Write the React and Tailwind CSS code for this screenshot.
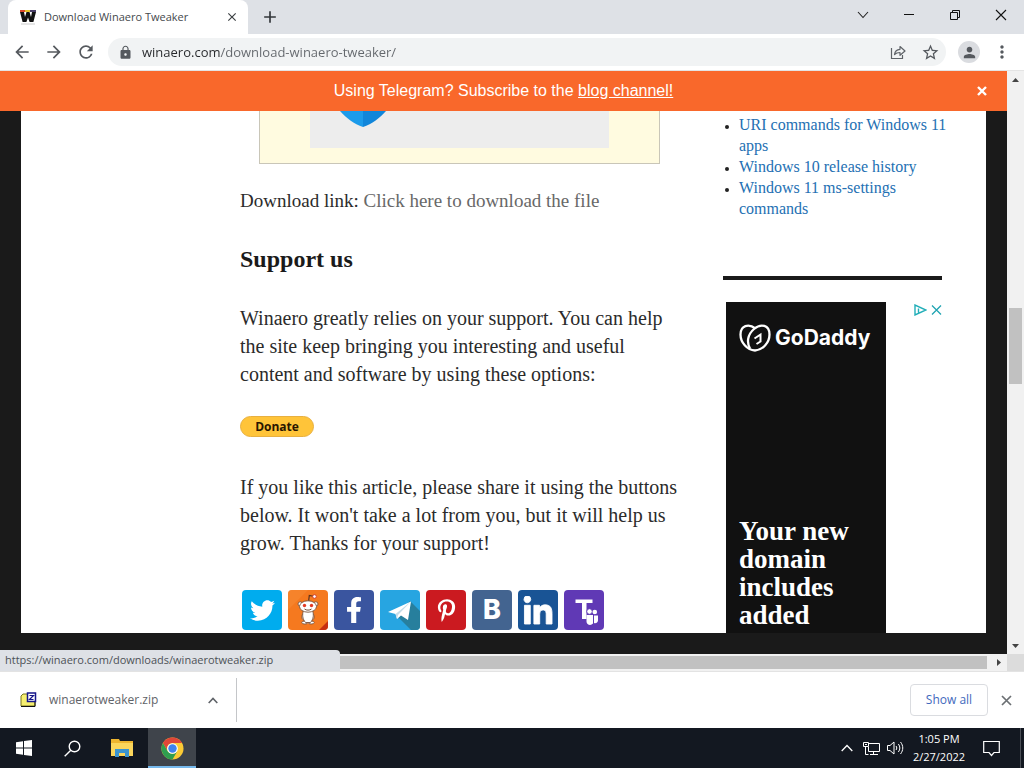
import React from "react";
import { MdArrowBack, MdArrowForward, MdRefresh, MdLock, MdStarBorder, MdMoreVert, MdPerson, MdClose, MdAdd } from "react-icons/md";
import { FaTwitter, FaFacebookF, FaPinterestP, FaLinkedinIn } from "react-icons/fa";

const uiFont = "font-['Open_Sans','Noto_Sans',sans-serif]";
const serif = "font-['Liberation_Serif',serif]";

function TabStrip() {
  return (
    <header className="flex h-[34px] shrink-0 items-stretch bg-[#dee1e6]">
      <div className="ml-2 flex w-60 items-center rounded-t-lg bg-white pl-3 pr-2">
        <svg width="16" height="16" viewBox="0 0 16 16" aria-hidden="true" className="shrink-0">
          <path d="M0 3h4l1 5 1.500-5h3L11 8l1-5h4l-2.600 10H9.600L8 8.500 6.400 13H2.600z" fill="#111" />
          <path d="M0 2h5" stroke="#d9472b" strokeWidth="2" />
          <path d="M5 2h5" stroke="#e8c32c" strokeWidth="2" />
          <path d="M10 2h6" stroke="#4a3f68" strokeWidth="2" />
          <path d="M1 15h14" stroke="#ccc" />
        </svg>
        <span className="ml-2 flex-1 whitespace-nowrap text-[11px] text-[#45494d]">Download Winaero Tweaker</span>
        <button aria-label="Close tab" className="flex size-4 items-center justify-center text-[#3c4043]"><MdClose size={14} /></button>
      </div>
      <button aria-label="New tab" className="ml-3 flex w-5 items-center justify-center text-[#33373b]"><MdAdd size={20} /></button>
      <div className="flex-1" />
      <div className="flex items-center pb-1">
        <button aria-label="Search tabs" className="flex w-[46px] justify-center">
          <svg width="12" height="8" viewBox="0 0 12 8" fill="none" stroke="#222" strokeWidth="1.100"><path d="M1 1l5 5.500L11 1" /></svg>
        </button>
        <button aria-label="Minimize" className="flex w-[46px] justify-center">
          <svg width="10" height="10" viewBox="0 0 10 10" stroke="#111"><path d="M0 4.500h10" /></svg>
        </button>
        <button aria-label="Restore" className="flex w-[46px] justify-center">
          <svg width="10" height="10" viewBox="0 0 10 10" fill="none" stroke="#111"><path d="M.5 2.500h7v7h-7zM2.500 2.500v-2h7v7h-2" /></svg>
        </button>
        <button aria-label="Close window" className="flex w-[46px] justify-center">
          <svg width="12" height="12" viewBox="0 0 12 12" stroke="#111" strokeWidth="1.100"><path d="M1 1l10 10M11 1L1 11" /></svg>
        </button>
      </div>
    </header>
  );
}

function Toolbar() {
  return (
    <div className="flex h-[37px] shrink-0 items-center border-b border-[#e4e4e4] bg-white px-3 text-[#55595e]">
      <button aria-label="Back" className="flex w-5 justify-center"><MdArrowBack size={20} /></button>
      <button aria-label="Forward" className="ml-3 flex w-5 justify-center"><MdArrowForward size={20} /></button>
      <button aria-label="Reload" className="ml-3 flex w-5 justify-center"><MdRefresh size={20} /></button>
      <div className="ml-3 flex h-7 flex-1 items-center rounded-full bg-[#f1f3f4] pl-[10px] pr-[6px]">
        <MdLock size={15} className="shrink-0" />
        <input
          aria-label="Address"
          defaultValue="winaero.com/download-winaero-tweaker/"
          className="ml-[9px] h-7 min-w-0 flex-1 bg-[linear-gradient(90deg,#26282b_78px,#63676c_78px)] bg-clip-text text-[13px] text-transparent outline-none"
        />
        <button aria-label="Share this page" className="flex w-5 justify-center">
          <svg width="16" height="16" viewBox="0 0 16 16" fill="none" stroke="#5f6368" strokeWidth="1.200">
            <path d="M1.500 4v10.500h11V11" />
            <path d="M4.500 10.500c.5-3.500 2.500-5 5.500-5.200V2.500l5 4.500-5 4.300V8.500c-2.500 0-4 .5-5.500 2z" strokeLinejoin="round" />
          </svg>
        </button>
        <button aria-label="Bookmark this tab" className="ml-3 flex w-5 justify-center"><MdStarBorder size={19} /></button>
      </div>
      <button aria-label="Profile" className="ml-3 flex size-[22px] items-center justify-center rounded-full bg-[#dadce0]"><MdPerson size={17} /></button>
      <button aria-label="Menu" className="ml-3 flex w-5 justify-center"><MdMoreVert size={20} /></button>
    </div>
  );
}

const tile = "flex size-10 items-center justify-center overflow-hidden rounded-[4px] text-white";

function ShareButtons() {
  return (
    <div className="mt-[33px] flex gap-[6px] pl-[2px]">
      <a href="#twitter" aria-label="Twitter" className={`${tile} bg-[#00acee]`}><FaTwitter size={25} /></a>
      <a href="#reddit" aria-label="Reddit" className={`${tile} bg-[#f5791f]`}>
        <svg width="40" height="40" viewBox="0 0 40 40">
          <path d="M0 20L20 0H0z" fill="#f68a33" opacity=".6" />
          <path d="M40 31v9h-9z" fill="#c62f12" />
          <path d="M20.500 12l.8-6.500 5 1" fill="none" stroke="#5a3320" strokeWidth="1.200" />
          <circle cx="26.500" cy="6.500" r="1.800" fill="#fff" stroke="#c33" strokeWidth=".8" />
          <g fill="#fff" stroke="#7b523a" strokeWidth=".9">
            <ellipse cx="16.800" cy="32.500" rx="3" ry="1.500" />
            <ellipse cx="23.200" cy="32.500" rx="3" ry="1.500" />
            <path d="M15.200 23c-2 3-1.500 6 .2 7M24.800 23c2 3 1.500 6-.2 7" />
            <path d="M15.500 20h9c1.500 5 1 9-2 12.500h-5c-3-3.500-3.500-7.500-2-12.500z" />
            <circle cx="12.200" cy="14" r="2.200" /><circle cx="27.800" cy="14" r="2.200" />
            <ellipse cx="20" cy="16.500" rx="8.500" ry="5.700" />
          </g>
          <circle cx="16.500" cy="15.500" r="1.700" fill="#e33b26" /><circle cx="23.500" cy="15.500" r="1.700" fill="#e33b26" />
          <path d="M16.500 19c2 1.500 5 1.500 7 0" fill="none" stroke="#754d38" />
        </svg>
      </a>
      <a href="#facebook" aria-label="Facebook" className={`${tile} bg-[#3a559f]`}><FaFacebookF size={26} /></a>
      <a href="#telegram" aria-label="Telegram" className={`${tile} bg-[#27a5e1]`}>
        <svg width="40" height="40" viewBox="0 0 40 40">
          <path d="M30 11l10 10v19H31L17 26z" fill="#277f9d" />
          <path d="M8 22l23-10.500L28 30l-7-4.500-4 3.500-1.500-5z" fill="#fff" />
          <path d="M15.500 24L31 11.500 18 25l-1 4z" fill="#c5dce8" />
        </svg>
      </a>
      <a href="#pinterest" aria-label="Pinterest" className={`${tile} bg-[#cb1a20]`}><FaPinterestP size={23} /></a>
      <a href="#vk" aria-label="VK" className={`${tile} bg-[#436490] font-['Inter',sans-serif] text-[27px] font-extrabold leading-10`}>B</a>
      <a href="#linkedin" aria-label="LinkedIn" className={`${tile} bg-[#195495] pt-1`}><FaLinkedinIn size={32} stroke="currentColor" strokeWidth={14} /></a>
      <a href="#teams" aria-label="Teams" className={`${tile} bg-[#6039b5]`}>
        <svg width="40" height="40" viewBox="0 0 40 40" fill="#fff">
          <path d="M11.500 9.500h17v3.500h-6v16h-4.500V13h-6.500z" />
          <circle cx="25.500" cy="21.500" r="2.800" stroke="#6039b5" /><circle cx="30.800" cy="22" r="2.300" />
          <path d="M22.500 25h6.500v8.500c-2 2.500-6.500 1.500-6.500-2zM30 25.500h4v5c0 2-2.500 3.500-4 2.500z" />
        </svg>
      </a>
    </div>
  );
}

function Article() {
  return (
    <main className={`min-w-0 flex-1 whitespace-nowrap ${serif} text-[20px] leading-7 text-[#2b2b2b]`}>
      <div className="ml-[19px] mr-3 h-[53px] border border-t-0 border-[#c9c6b8] bg-[#fffbe0] px-[50px] pb-[15px]">
        <div className="h-full bg-[#ededed] pl-[30px]">
          <svg width="46" height="16" viewBox="0 0 46 16" aria-hidden="true">
            <path d="M0 0h23v16C14 13 6 7 0 0z" fill="#1c9bea" />
            <path d="M23 0h23C40 7 32 13 23 16z" fill="#1186da" />
          </svg>
        </div>
      </div>
      <p className="mt-[23px] text-[19px]">Download link: <a href="#download" className="text-[#686868]">Click here to download the file</a></p>
      <h2 className="mt-[30px] text-[24px] font-bold text-[#1a1a1a]">Support us</h2>
      <p className="mt-[31px]">Winaero greatly relies on your support. You can help<br />the site keep bringing you interesting and useful<br />content and software by using these options:</p>
      <button className={`mt-7 block h-[21px] w-[74px] rounded-full border border-[#e8b040] bg-[#ffc439] ${uiFont} text-[12px] font-bold leading-[18px] text-[#2a1500]`}>Donate</button>
      <p className="mt-9">If you like this article, please share it using the buttons<br />below. It won't take a lot from you, but it will help us<br />grow. Thanks for your support!</p>
      <ShareButtons />
    </main>
  );
}

function Sidebar() {
  return (
    <aside className={`w-[219px] shrink-0 ${serif}`}>
      <ul className="list-disc whitespace-nowrap pl-4 pt-[3px] text-[16px] leading-[21px] text-[#222] marker:text-[12px]">
        <li><a href="#uri" className="text-[#2470b3]">URI commands for Windows 11<br />apps</a></li>
        <li><a href="#history" className="text-[#2470b3]">Windows 10 release history</a></li>
        <li><a href="#settings" className="text-[#2470b3]">Windows 11 ms-settings<br />commands</a></li>
      </ul>
      <hr className="mt-[57px] border-0 border-t-4 border-[#1a1a1a]" />
      <div className="mt-[22px] flex items-start justify-between pl-[3px]">
        <a href="#godaddy" className="flex h-[400px] w-40 flex-col bg-[#111] pl-[13px] pt-[21px] text-white">
          <span className="flex items-center gap-1">
            <svg width="32" height="30" viewBox="0 0 32 30" fill="none" stroke="#fff" strokeWidth="2.300" className="shrink-0">
              <path d="M16 27.500C8 27 1.500 19.500 1.500 11.500 1.500 2.500 9.500 0 16.500 5.500" />
              <path d="M16 27.500c8-.5 14.500-8 14.500-16C30.500 2 22 0 15 6 8.500 11.500 7.500 19.500 11 25.500" />
              <path d="M15.500 15.500l6-4v7l-4 2.500" strokeWidth="2" />
            </svg>
            <span className="font-['Inter',sans-serif] text-[21px] font-bold leading-[30px]">GoDaddy</span>
          </span>
          <span className="mt-[164px] text-[27px] font-bold leading-7">Your new<br />domain<br />includes<br />added<br />privacy</span>
        </a>
        <div className="flex gap-1 pt-[2px]">
          <button aria-label="AdChoices">
            <svg width="13" height="12" viewBox="0 0 13 12" fill="none" stroke="#21aeb8" strokeWidth="1.400"><path d="M1 1v10l11-5zM4.500 4.500v4" /></svg>
          </button>
          <button aria-label="Close ad">
            <svg width="11" height="12" viewBox="0 0 11 12" stroke="#21a4b2" strokeWidth="1.300"><path d="M1 1.500l9 9M10 1.500l-9 9" /></svg>
          </button>
        </div>
      </div>
    </aside>
  );
}

function Viewport() {
  return (
    <div className="relative flex min-h-0 flex-1 flex-col">
      <div className="flex min-h-0 flex-1">
        <div className="flex min-w-0 flex-1 flex-col bg-[#1a1a1a]">
          <div className="flex h-10 shrink-0 items-center bg-[#f9682b] pr-5 font-['Liberation_Sans',sans-serif] text-[16px] text-white">
            <p className="flex-1 pl-5 text-center">Using Telegram? Subscribe to the <a href="#channel" className="underline">blog channel!</a></p>
            <button aria-label="Dismiss" className="-ml-[10px] flex w-[10px] justify-center">
              <svg width="10" height="10" viewBox="0 0 10 10" stroke="#fff" strokeWidth="2.400"><path d="M1 1l8 8M9 1L1 9" /></svg>
            </button>
          </div>
          <div className="mx-[21px] mb-[21px] flex min-h-0 flex-1 gap-[51px] overflow-hidden bg-white pl-[219px] pr-11">
            <Article />
            <Sidebar />
          </div>
        </div>
        <div className="flex w-[17px] flex-col items-center bg-[#f1f1f1]">
          <svg width="17" height="17" viewBox="0 0 17 17"><path d="M5 11l3.500-4 3.500 4z" fill="#444" /></svg>
          <div className="flex-[220]" />
          <div className="h-[76px] w-[13px] bg-[#c1c1c1]" />
          <div className="flex-[253]" />
          <svg width="17" height="17" viewBox="0 0 17 17"><path d="M5 7l3.500 4L12 7z" fill="#444" /></svg>
        </div>
      </div>
      <div className="flex h-[17px] shrink-0 items-center bg-[#f1f1f1]">
        <div className="ml-4 h-[13px] flex-1 bg-[#c1c1c1]" />
        <svg width="20" height="17" viewBox="0 0 20 17"><path d="M10 5l4 3.500-4 3.500z" fill="#444" /></svg>
        <div className="h-full w-[17px] bg-[#dcdcdc]" />
      </div>
      <div className="absolute bottom-0 left-0 flex h-[21px] w-[340px] items-center rounded-tr bg-[#dee1e6] pl-[5px] text-[11px] text-[#4d5156]">https://winaero.com/downloads/winaerotweaker.zip</div>
    </div>
  );
}

function Downloads() {
  return (
    <section className="flex h-[57px] shrink-0 items-center border-t border-[#e3e3e3] bg-white pr-3 text-[#5f6368]">
      <div className="flex h-11 w-[237px] items-center border-r border-[#c4c6c9] pl-5">
        <svg width="17" height="16" viewBox="0 0 17 16" aria-hidden="true" className="shrink-0">
          <path d="M1 14V4l2-2h5l1 2h6v10z" fill="#f6ef70" stroke="#77751d" />
          <path d="M1 14.500h14V9" fill="none" stroke="#111" />
          <path d="M7.500 1h8v8.500h-8z" fill="#fff" stroke="#16168a" strokeWidth="1.500" />
          <path d="M9.500 3.500h4l-4 4h4" fill="none" stroke="#16168a" strokeWidth="1.200" />
        </svg>
        <button className="ml-3 flex-1 text-left text-[12px]">winaerotweaker.zip</button>
        <button aria-label="Download options" className="mr-[18px]">
          <svg width="10" height="7" viewBox="0 0 10 7" fill="none" stroke="#5f6368" strokeWidth="1.600"><path d="M.7 6L5 1.500 9.300 6" /></svg>
        </button>
      </div>
      <div className="flex-1" />
      <button className="h-8 w-[78px] rounded border border-[#dadce0] text-[12px] font-medium text-[#3f69bd]">Show all</button>
      <button aria-label="Close downloads" className="ml-3 flex size-3 items-center justify-center">
        <svg width="11" height="11" viewBox="0 0 11 11" stroke="#6b6f73" strokeWidth="1.700"><path d="M1 1l9 9M10 1l-9 9" /></svg>
      </button>
    </section>
  );
}

function Taskbar() {
  return (
    <footer className="flex h-10 shrink-0 items-stretch bg-[#131821] text-white">
      <button aria-label="Start" className="flex w-12 items-center justify-center">
        <svg width="16" height="16" viewBox="0 0 16 16" fill="#fff"><path d="M0 2.300L7 1.300v6.200H0zM8 1.100L16 0v7.500H8zM0 8.500h7v6.200l-7-1zM8 8.500h8V16l-8-1.100z" /></svg>
      </button>
      <button aria-label="Search" className="flex w-12 items-center justify-center">
        <svg width="17" height="17" viewBox="0 0 17 17" fill="none" stroke="#fff" strokeWidth="1.400"><circle cx="10.500" cy="6.500" r="5.300" /><path d="M6.800 10.300L.7 16.300" /></svg>
      </button>
      <button aria-label="File Explorer" className="flex w-[52px] items-center justify-center">
        <svg width="22" height="20" viewBox="0 0 22 20">
          <path d="M0 1h8l1 2h13v15H0z" fill="#eeb52f" />
          <path d="M0 5h22v13H0z" fill="#fbd65c" />
          <path d="M4 11h14v8h-4v-4H8v4H4z" fill="#3b94cf" />
        </svg>
      </button>
      <button aria-label="Google Chrome" className="flex w-12 items-center justify-center border-b-2 border-[#76b9ed] bg-[#3f444b] pt-[2px]">
        <svg width="23" height="23" viewBox="0 0 24 24">
          <circle cx="12" cy="12" r="11.500" fill="#fbca35" />
          <path d="M2.040 6.250A11.500 11.500 0 0 1 21.960 6.250H12a5.750 5.750 0 0 0-4.980 8.620z" fill="#e04638" />
          <path d="M2.040 6.250l4.980 8.620A5.750 5.750 0 0 0 16.980 14.870L12 23.500A11.500 11.500 0 0 1 2.040 6.250z" fill="#2f9e50" />
          <circle cx="12" cy="12" r="5.600" fill="#fff" />
          <circle cx="12" cy="12" r="4.400" fill="#3f82ee" />
        </svg>
      </button>
      <div className="flex-1" />
      <button aria-label="Hidden icons" className="flex w-6 items-center justify-center">
        <svg width="12" height="8" viewBox="0 0 12 8" fill="none" stroke="#fff" strokeWidth="1.300"><path d="M.7 7L6 1.500 11.300 7" /></svg>
      </button>
      <button aria-label="Network" className="flex w-6 items-center justify-center">
        <svg width="17" height="15" viewBox="0 0 17 15" fill="none" stroke="#fff"><path d="M6 2.500h10.500v8H5.500V6M10.500 10.500v3M7 13.500h8M.5 1.500h5v4h-5zM2.500 5.500v8h3M2 3.500h2" /></svg>
      </button>
      <button aria-label="Volume" className="flex w-6 items-center justify-center">
        <svg width="17" height="14" viewBox="0 0 17 14" fill="none" stroke="#fff"><path d="M.5 4.500h2.500l4-3.500v12l-4-3.500H.5zM9 5c1 1.300 1 2.700 0 4M11.300 3c2 2.500 2 5.500 0 8M13.500 1c3 3.700 3 8.300 0 12" /></svg>
      </button>
      <button className="flex w-16 flex-col items-center justify-center whitespace-nowrap text-[11px] leading-[18px]"><span>1:05 PM</span><span>2/27/2022</span></button>
      <button aria-label="Notifications" className="flex w-10 items-center justify-center">
        <svg width="17" height="17" viewBox="0 0 17 17" fill="none" stroke="#fff" strokeWidth="1.200"><path d="M.7 1.500h15.600v11H11L8.500 15.500 6 12.500H.7z" /></svg>
      </button>
      <div className="ml-[9px] w-1 border-l border-[#4b4f57]" />
    </footer>
  );
}

export default function App() {
  return (
    <div className={`flex h-screen flex-col overflow-hidden ${uiFont}`}>
      <TabStrip />
      <Toolbar />
      <Viewport />
      <Downloads />
      <Taskbar />
    </div>
  );
}
